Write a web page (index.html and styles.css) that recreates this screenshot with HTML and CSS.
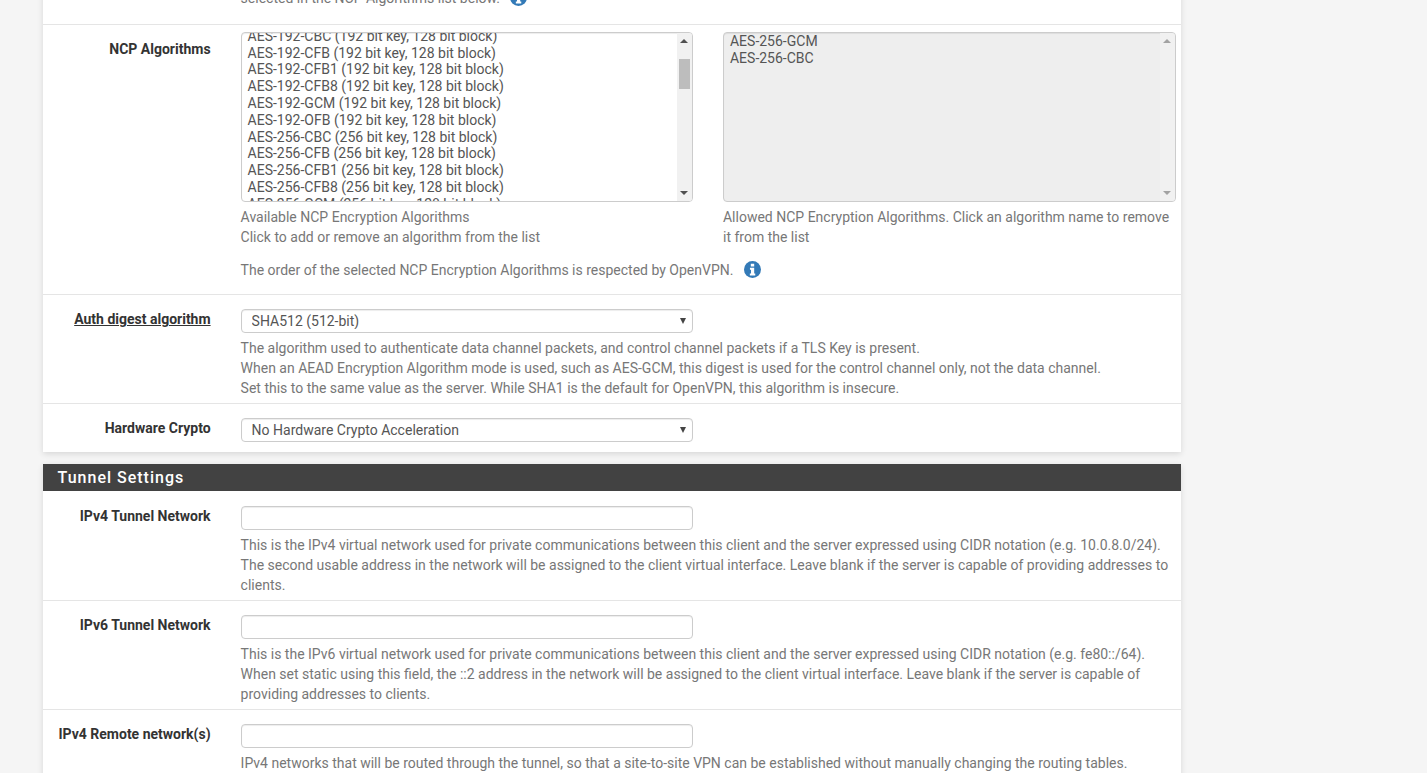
FILE: index.html
```html
<!DOCTYPE html>
<html lang="en">
<head>
    <meta charset="UTF-8">
    <meta name="viewport" content="width=device-width, initial-scale=1.0">
    <title>OpenVPN Client Settings</title>
    <link rel="stylesheet" href="styles.css">
</head>
<body>
    <svg class="icon-defs" width="0" height="0" aria-hidden="true">
        <symbol id="info" viewBox="0 0 16 16">
            <circle cx="8" cy="8" r="8" fill="#337ab7"/>
            <path fill="#fff" d="M6.4 2.7h3.2v2.4H6.4zM5.6 6.4h4v5.3h1v1.9H5.5v-1.9h1.1V8.3h-1z"/>
        </symbol>
    </svg>
    <div class="container">
        <!-- Cryptographic settings (page is scrolled, top of this panel is off screen) -->
        <div class="panel panel-first">
            <div class="form-row form-row-top">
                <div></div>
                <div class="help-line">selected in the NCP Algorithms list below. <svg class="info-icon"><use href="#info"/></svg></div>
            </div>

            <div class="form-row form-row-ncp">
                <label>NCP Algorithms</label>
                <div>
                    <div class="list-pair">
                        <div>
                            <div class="list-box">
                                <div class="list-options list-options-scrolled">
                                    <div>AES-192-CBC (192 bit key, 128 bit block)</div>
                                    <div>AES-192-CFB (192 bit key, 128 bit block)</div>
                                    <div>AES-192-CFB1 (192 bit key, 128 bit block)</div>
                                    <div>AES-192-CFB8 (192 bit key, 128 bit block)</div>
                                    <div>AES-192-GCM (192 bit key, 128 bit block)</div>
                                    <div>AES-192-OFB (192 bit key, 128 bit block)</div>
                                    <div>AES-256-CBC (256 bit key, 128 bit block)</div>
                                    <div>AES-256-CFB (256 bit key, 128 bit block)</div>
                                    <div>AES-256-CFB1 (256 bit key, 128 bit block)</div>
                                    <div>AES-256-CFB8 (256 bit key, 128 bit block)</div>
                                    <div>AES-256-GCM (256 bit key, 128 bit block)</div>
                                </div>
                                <div class="fake-scrollbar">
                                    <span class="arrow-up"></span>
                                    <span class="thumb"></span>
                                    <span class="arrow-down"></span>
                                </div>
                            </div>
                            <p class="help">Available NCP Encryption Algorithms<br>Click to add or remove an algorithm from the list</p>
                        </div>
                        <div>
                            <div class="list-box list-box-disabled">
                                <div class="list-options">
                                    <div>AES-256-GCM</div>
                                    <div>AES-256-CBC</div>
                                </div>
                                <div class="fake-scrollbar">
                                    <span class="arrow-up"></span>
                                    <span class="arrow-down"></span>
                                </div>
                            </div>
                            <p class="help">Allowed NCP Encryption Algorithms. Click an algorithm name to remove it from the list</p>
                        </div>
                    </div>
                    <p class="help help-note">The order of the selected NCP Encryption Algorithms is respected by OpenVPN. <svg class="info-icon"><use href="#info"/></svg></p>
                </div>
            </div>

            <div class="form-row">
                <label class="label-underlined">Auth digest algorithm</label>
                <div>
                    <div class="select-wrap">
                        <select class="field">
                            <option>SHA512 (512-bit)</option>
                        </select>
                    </div>
                    <p class="help">The algorithm used to authenticate data channel packets, and control channel packets if a TLS Key is present.<br>
                    When an AEAD Encryption Algorithm mode is used, such as AES-GCM, this digest is used for the control channel only, not the data channel.<br>
                    Set this to the same value as the server. While SHA1 is the default for OpenVPN, this algorithm is insecure.</p>
                </div>
            </div>

            <div class="form-row form-row-last">
                <label>Hardware Crypto</label>
                <div>
                    <div class="select-wrap">
                        <select class="field">
                            <option>No Hardware Crypto Acceleration</option>
                        </select>
                    </div>
                </div>
            </div>
        </div>

        <!-- Tunnel Settings -->
        <div class="panel">
            <h2 class="panel-title">Tunnel Settings</h2>

            <div class="form-row">
                <label>IPv4 Tunnel Network</label>
                <div>
                    <input type="text" class="field">
                    <p class="help">This is the IPv4 virtual network used for private communications between this client and the server expressed using CIDR notation (e.g. 10.0.8.0/24). The second usable address in the network will be assigned to the client virtual interface. Leave blank if the server is capable of providing addresses to clients.</p>
                </div>
            </div>

            <div class="form-row">
                <label>IPv6 Tunnel Network</label>
                <div>
                    <input type="text" class="field">
                    <p class="help">This is the IPv6 virtual network used for private communications between this client and the server expressed using CIDR notation (e.g. fe80::/64). When set static using this field, the ::2 address in the network will be assigned to the client virtual interface. Leave blank if the server is capable of providing addresses to clients.</p>
                </div>
            </div>

            <div class="form-row">
                <label>IPv4 Remote network(s)</label>
                <div>
                    <input type="text" class="field">
                    <p class="help">IPv4 networks that will be routed through the tunnel, so that a site-to-site VPN can be established without manually changing the routing tables.</p>
                </div>
            </div>
        </div>
    </div>
</body>
</html>
```

FILE: styles.css
```css
html, body {
    height: 100%;
    overflow: hidden;
}
body {
    font-family: Roboto, "Liberation Sans", sans-serif;
    font-size: 14px;
    margin: 0;
    padding: 0;
    background-color: #f5f5f5;
    color: #333;
}
.icon-defs {
    display: block;
}
.container {
    width: 1138px;
    margin-left: 43px;
}
.panel {
    background-color: white;
    box-shadow: 0 2px 6px rgba(0, 0, 0, .12);
    margin-bottom: 12px;
}
.panel-first {
    margin-top: -12px;
}
.panel-title {
    height: 27px;
    margin: 0;
    padding-left: 14.6px;
    background-color: #424242;
    color: white;
    font-size: 16px;
    font-weight: 500;
    line-height: 27px;
    letter-spacing: 1px;
}
.form-row {
    display: grid;
    grid-template-columns: 167.6px 1fr;
    column-gap: 30px;
    padding: 14px 5px 5px 0;
    border-top: 1px solid #e5e5e5;
}
.panel-title + .form-row {
    border-top-color: white;
}
.form-row-top {
    padding: 0 5px 16px 0;
    border-top: none;
}
.form-row-ncp {
    padding-top: 7px;
    padding-bottom: 14px;
}
.form-row-ncp label {
    padding-top: 7px;
}
.form-row-last {
    padding-bottom: 10px;
}
.form-row label {
    font-weight: 700;
    line-height: 20px;
    text-align: right;
    color: #333;
}
.label-underlined {
    text-decoration: underline;
    justify-self: end;
}
.field {
    display: block;
    box-sizing: border-box;
    width: 452px;
    height: 24px;
    padding: 0 10px;
    border: 1px solid #ccc;
    border-radius: 4px;
    background-color: white;
    font-family: inherit;
    font-size: 14px;
    color: #555;
    box-shadow: inset 0 1px 1px rgba(0, 0, 0, .075);
}
select.field {
    appearance: none;
}
.select-wrap {
    position: relative;
    width: 452px;
}
.select-wrap::after {
    content: "";
    position: absolute;
    top: 9px;
    right: 7px;
    width: 0;
    height: 0;
    border-left: 3px solid transparent;
    border-right: 3px solid transparent;
    border-top: 6px solid #444;
    pointer-events: none;
}
.help, .help-line {
    margin: 5px 0 0;
    line-height: 20px;
    color: #777;
}
.help-line {
    margin: 0;
}
.help-note {
    margin-top: 13px;
}
.info-icon {
    width: 17px;
    height: 17px;
    margin-left: 7px;
    vertical-align: -3px;
}
.list-pair {
    display: grid;
    grid-template-columns: 452.4px 453px;
    column-gap: 30px;
}
.list-box {
    display: flex;
    box-sizing: border-box;
    height: 170px;
    border: 1px solid #ccc;
    border-radius: 4px;
    background-color: white;
    color: #555;
    overflow: hidden;
    box-shadow: inset 0 1px 1px rgba(0, 0, 0, .075);
}
.list-options {
    flex: 1;
    padding-left: 6px;
    line-height: 16.8px;
    white-space: nowrap;
    overflow: hidden;
}
.list-options-scrolled div:first-child {
    margin-top: -5.2px;
}
.fake-scrollbar {
    display: flex;
    flex-direction: column;
    align-items: center;
    width: 15px;
    background-color: #f1f1f1;
}
.arrow-up, .arrow-down {
    width: 0;
    height: 0;
    border-left: 4px solid transparent;
    border-right: 4px solid transparent;
}
.arrow-up {
    margin-top: 6px;
    border-bottom: 4px solid #505050;
}
.arrow-down {
    margin-top: auto;
    margin-bottom: 6px;
    border-top: 4px solid #505050;
}
.thumb {
    width: 11px;
    height: 30px;
    margin-top: 16px;
    background-color: #bdbdbd;
}
.list-box-disabled {
    background-color: #eee;
}
.list-box-disabled .arrow-up {
    border-bottom-color: #a3a3a3;
}
.list-box-disabled .arrow-down {
    border-top-color: #a3a3a3;
}
```
